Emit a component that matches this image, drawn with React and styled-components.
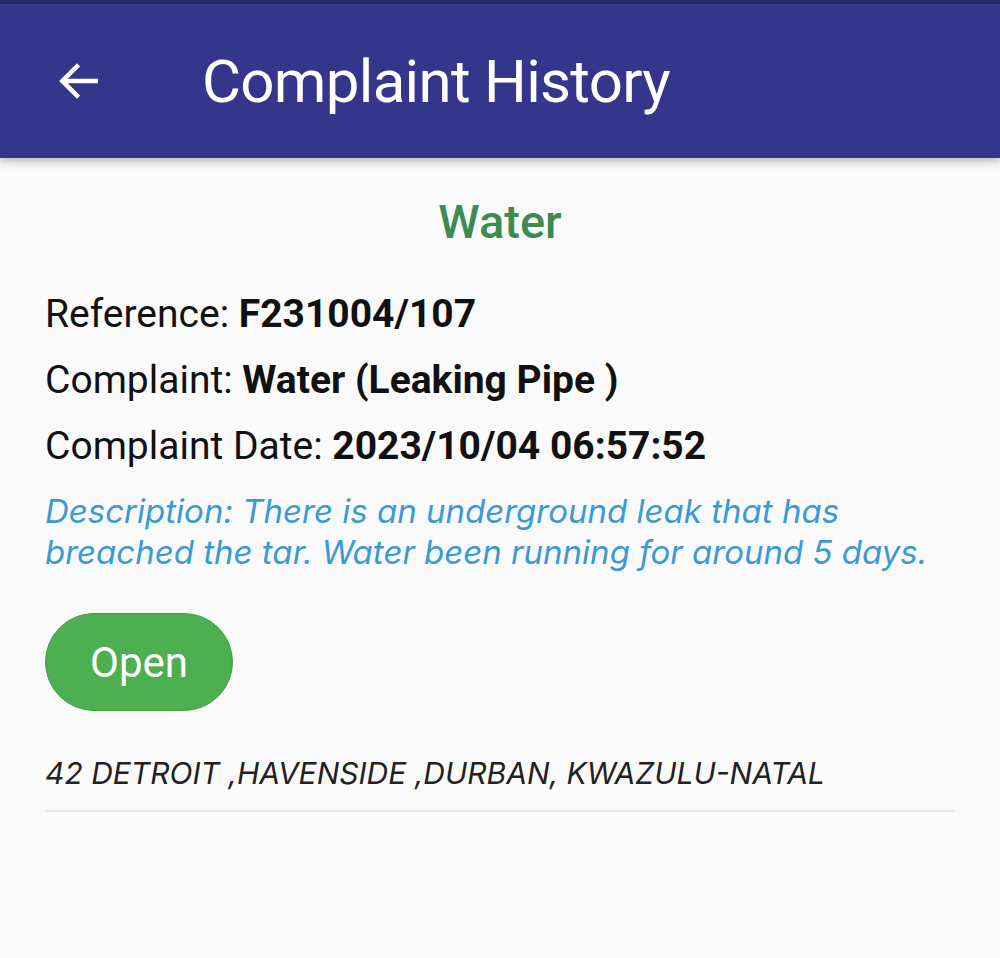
import styled, { createGlobalStyle } from "styled-components";

const GlobalStyle = createGlobalStyle`
	html, body {
		margin: 0;
		padding: 0;
		background: #fafafa;
		font-family: Roboto, "Noto Sans", sans-serif;
	}
`;

const Page = styled.div`
	width: 1000px;
	min-height: 958px;
	background: #fafafa;
	border-top: 4px solid #272a6f;
	box-sizing: border-box;
`;

const AppBar = styled.header`
	display: flex;
	align-items: center;
	height: 154px;
	padding: 0 0 0 54px;
	background: #34368c;
	box-shadow: 0 4px 8px rgba(0, 0, 0, 0.25);
	box-sizing: border-box;
`;

const BackButton = styled.button`
	display: flex;
	align-items: center;
	justify-content: center;
	width: 50px;
	height: 50px;
	padding: 0;
	margin-right: 98px;
	border: none;
	background: none;
	color: #fff;
`;

const Title = styled.h1`
	margin: 0;
	color: #fff;
	font-size: 60px;
	font-weight: 400;
	letter-spacing: -0.7px;
`;

const Content = styled.main`
	padding: 36px 45px 0 45px;
`;

const Category = styled.h2`
	margin: 0 0 36px;
	text-align: center;
	color: #3e8b52;
	font-size: 47px;
	font-weight: 500;
	line-height: 56px;
`;

const Field = styled.p`
	margin: 0 0 10px;
	color: #111;
	font-size: 39px;
	line-height: 56px;
	b {
		font-weight: 700;
	}
`;

const Description = styled.p`
	margin: 17px 0 0;
	color: #3b9ad4;
	font-family: Inter, "Noto Sans", sans-serif;
	font-size: 33px;
	font-style: italic;
	line-height: 41px;
`;

const StatusPill = styled.div`
	display: inline-flex;
	align-items: center;
	justify-content: center;
	width: 188px;
	height: 98px;
	margin-top: 40px;
	border-radius: 49px;
	border: 1.5px solid #43a047;
	background: #4caf50;
	color: #fff;
	font-size: 42px;
	box-sizing: border-box;
`;

const Address = styled.p`
	margin: 42px 0 0;
	padding-bottom: 17px;
	color: #222;
	font-family: Inter, "Noto Sans", sans-serif;
	font-size: 30px;
	font-style: italic;
	line-height: 40px;
	border-bottom: 2px solid #e8e8e8;
`;

const App = () => {
	return (
		<>
			<GlobalStyle />
			<Page>
				<AppBar>
					<BackButton aria-label='back'>
						<svg width='50' height='50' viewBox='0 0 24 24' fill='none' stroke='#fff' strokeWidth='2.2' strokeLinecap='square'>
							<path d='M20 12H4.5' />
							<path d='M11 5L4 12l7 7' />
						</svg>
					</BackButton>
					<Title>Complaint History</Title>
				</AppBar>
				<Content>
					<Category>Water</Category>
					<Field>
						Reference: <b>F231004/107</b>
					</Field>
					<Field>
						Complaint: <b>Water (Leaking Pipe )</b>
					</Field>
					<Field>
						Complaint Date: <b>2023/10/04 06:57:52</b>
					</Field>
					<Description>
						Description: There is an underground leak that has breached the tar. Water been
						running for around 5 days.
					</Description>
					<StatusPill>Open</StatusPill>
					<Address>42 DETROIT ,HAVENSIDE ,DURBAN, KWAZULU-NATAL</Address>
				</Content>
			</Page>
		</>
	);
};

export default App;
